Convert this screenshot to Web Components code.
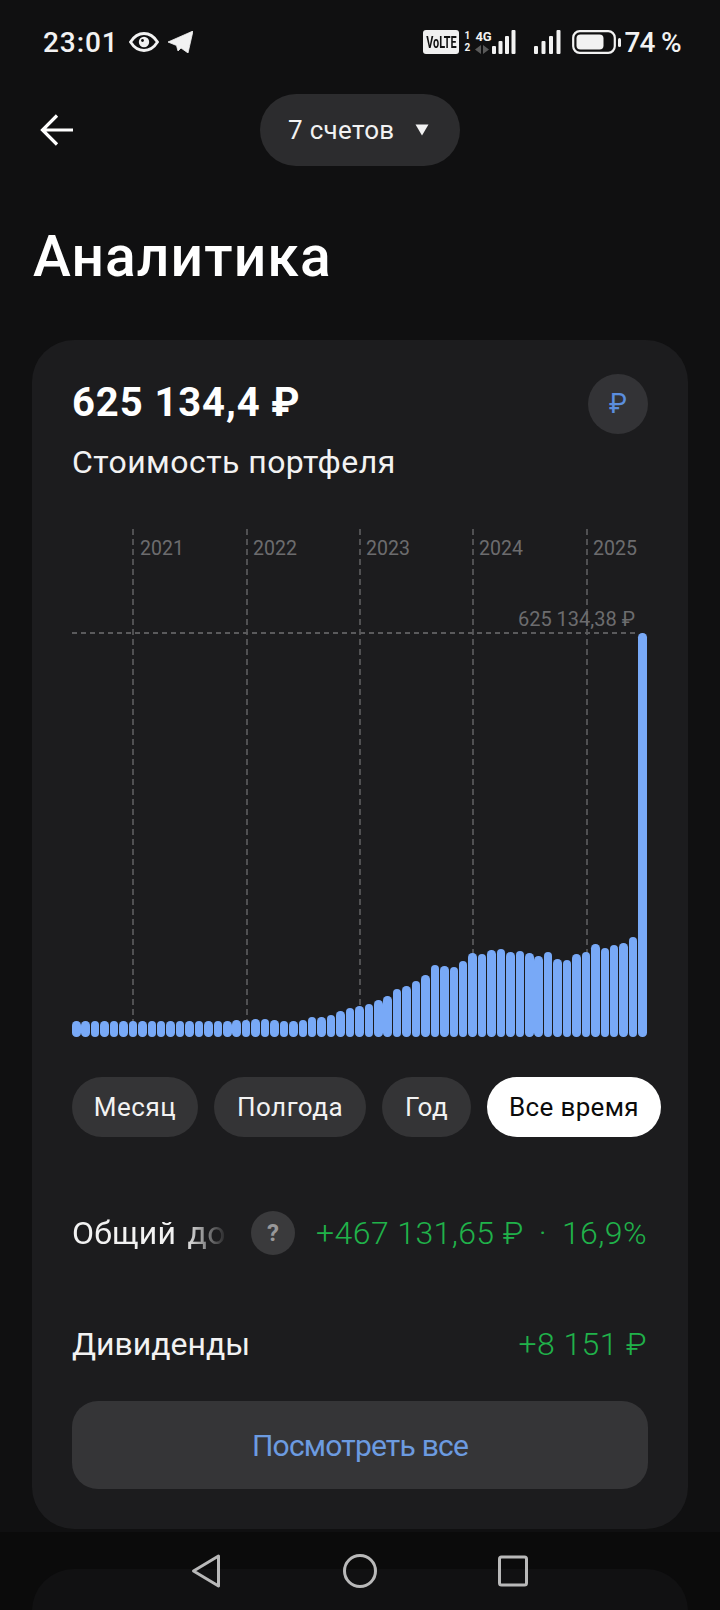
<!DOCTYPE html>
<html lang="ru">
<head>
<meta charset="utf-8">
<title>Аналитика</title>
<style>
  html, body { margin: 0; height: 1610px; overflow: hidden; background: #101011; }
  body { font-family: Roboto, "Noto Sans", sans-serif; color: #fff; }
</style>
</head>
<body>
<analytics-screen></analytics-screen>

<script>
class StatusBar extends HTMLElement {
  constructor() {
    super();
    this.attachShadow({ mode: "open" });
  }

  connectedCallback() {
    this.shadowRoot.innerHTML = `
      <style>
        :host { display: flex; align-items: center; height: 84px; padding: 0 39px 0 43px; box-sizing: border-box; color: #f2f2f2; }
        .time { font: 500 28px Roboto, sans-serif; letter-spacing: .9px; }
        .left { display: flex; align-items: center; }
        .right { display: flex; align-items: center; margin-left: auto; }
        svg { display: block; }
        .volte { background: #f0f0f0; color: #111; width: 36px; height: 24px; border-radius: 3px; display: flex; align-items: center; justify-content: center; }
        .volte b { font: 700 16px Roboto, sans-serif; transform: scaleX(.68); white-space: nowrap; }
        .sims { font: 700 10px/12px Roboto, sans-serif; width: 16px; text-align: center; }
        .net { display: flex; flex-direction: column; width: 18px; height: 24px; font: 700 13px/13px Roboto, sans-serif; margin-right: -1px; }
        .net svg { margin-top: 2px; }
        .pct { font: 500 28px Roboto, sans-serif; margin-left: 3px; letter-spacing: -.7px; }
      </style>
      <div class="left">
        <span class="time">23:01</span>
        <svg style="margin-left:10px" width="30" height="20" viewBox="0 0 30 20">
          <path d="M1.500 10C5 4.500 9.500 1.500 15 1.500S25 4.500 28.500 10C25 15.500 20.500 18.500 15 18.500S5 15.500 1.500 10z" fill="none" stroke="#f2f2f2" stroke-width="2.800"/>
          <circle cx="15" cy="10" r="5.200" fill="#f2f2f2"/>
          <circle cx="13.500" cy="8.500" r="1.400" fill="#101011"/>
        </svg>
        <svg style="margin-left:9px" width="25" height="22" viewBox="0 0 25 22">
          <path d="M0 11 L25 0 L20 22 L13 17 L10 20 L8.500 14.500 Z" fill="#f2f2f2" stroke="#f2f2f2" stroke-width=".8" stroke-linejoin="round"/>
        </svg>
      </div>
      <div class="right">
        <span class="volte"><b>VoLTE</b></span>
        <span class="sims">1<br>2</span>
        <span class="net">4G
          <svg width="14" height="9" viewBox="0 0 14 9" fill="#5a5a5a"><path d="M0 4.500 6 0v9zM8 0l6 4.500L8 9z"/></svg>
        </span>
        <svg width="24" height="24" viewBox="0 0 24 24" fill="#f2f2f2">
          <rect x="0" y="16" width="4" height="8" rx="1"/><rect x="6.500" y="11" width="4" height="13" rx="1"/><rect x="13" y="6" width="4" height="18" rx="1"/><rect x="19.500" y="0" width="4" height="24" rx="1"/>
        </svg>
        <svg style="margin-left:17px" width="29" height="24" viewBox="0 0 29 24" fill="#f2f2f2">
          <rect x="1" y="16" width="4" height="8" rx="1"/><rect x="8.500" y="11" width="4" height="13" rx="1"/><rect x="16" y="6" width="4" height="18" rx="1"/><rect x="23.500" y="0" width="4" height="24" rx="1"/>
        </svg>
        <svg style="margin-left:10px" width="49" height="24" viewBox="0 0 49 24">
          <rect x="1.200" y="1.200" width="41.600" height="21.600" rx="6.500" fill="none" stroke="#f2f2f2" stroke-width="2.200"/>
          <rect x="4.500" y="4.500" width="27" height="15" rx="4" fill="#f2f2f2"/>
          <rect x="46" y="8" width="3" height="9" rx="1.500" fill="#f2f2f2"/>
        </svg>
        <span class="pct">74 %</span>
      </div>
    `;
  }
}

class AppHeader extends HTMLElement {
  constructor() {
    super();
    this.attachShadow({ mode: "open" });
  }

  connectedCallback() {
    this.shadowRoot.innerHTML = `
      <style>
        :host { display: grid; grid-template-columns: 1fr auto 1fr; align-items: center; padding: 0 40px; height: 92px; }
        svg { display: block; }
        .pill { display: flex; align-items: center; width: 200px; height: 72px; box-sizing: border-box; padding-left: 28px; background: #2c2c2e; border-radius: 36px; font: 400 26px Roboto, sans-serif; letter-spacing: .3px; color: #f2f2f2; }
        .pill svg { margin-left: auto; margin-right: 31px; }
      </style>
      <svg width="34" height="32" viewBox="0 0 34 32" fill="none" stroke="#fff" stroke-width="3.200">
        <path d="M33 16H3M17 1.500 2.500 16 17 30.500"/>
      </svg>
      <div class="pill"><slot></slot>
        <svg width="14" height="12" viewBox="0 0 14 12"><path d="M0.500 0.500h13L7 11.500z" fill="#f2f2f2"/></svg>
      </div>
      <span></span>
    `;
  }
}

class BarChart extends HTMLElement {
  constructor() {
    super();
    this.attachShadow({ mode: "open" });
  }

  connectedCallback() {
    // heights of the bars in px, read off the reference
    const tops = [363,363,363,363,363,363,363,363,363,363,363,363,363,363,363,363,362,360,360,357,357,359,362,362,360,351,351,343,331,324,318,311,298,287,265,258,243,224,194,196,199,183,158,161,150,147,155,152,157,167,155,176,179,160,154,130,143,135,129,109];
    const bars = tops.map((t) => `<i style="height:${((410 - t) / 3).toFixed(1)}px"></i>`).join("");
    const years = [["2021", 60], ["2022", 173], ["2023", 286], ["2024", 399], ["2025", 513]];
    const lines = [60, 173.500, 287, 400, 513.500];
    this.shadowRoot.innerHTML = `
      <style>
        :host { display: block; position: relative; height: 508px; }
        .bars { position: absolute; inset: 0; display: flex; align-items: flex-end; justify-content: space-between; width: 575px; }
        i { display: block; width: 8.500px; background: #78a9f7; border-radius: 4.250px; }
        i.max { height: 404px; }
        .v { position: absolute; top: 0; bottom: 4px; width: 2px; background: repeating-linear-gradient(180deg, #505052 0 6px, transparent 6px 10px); }
        .h { position: absolute; left: 0; width: 566px; top: 103px; height: 2px; background: repeating-linear-gradient(90deg, #5a5a5c 0 5px, transparent 5px 9px); }
        .y { position: absolute; top: 8px; margin-left: 8px; font: 400 19.500px/24px Roboto, sans-serif; color: #6c6c6e; }
        .max-label { position: absolute; right: 13px; top: 78px; font: 400 20px/24px Roboto, "Noto Sans", sans-serif; color: #6c6c6e; white-space: nowrap; }
      </style>
      ${lines.map((x) => `<div class="v" style="left:${x}px"></div>`).join("")}
      <div class="h"></div>
      ${years.map(([y, x]) => `<span class="y" style="left:${x}px">${y}</span>`).join("")}
      <span class="max-label">625 134,38 ₽</span>
      <div class="bars">${bars}<i class="max"></i></div>
    `;
  }
}

class RangePills extends HTMLElement {
  constructor() {
    super();
    this.attachShadow({ mode: "open" });
  }

  connectedCallback() {
    const items = [["Месяц", 126], ["Полгода", 152], ["Год", 89], ["Все время", 174]];
    const active = items.length - 1;
    this.shadowRoot.innerHTML = `
      <style>
        :host { display: flex; gap: 16px; }
        span { flex: none; display: flex; align-items: center; justify-content: center; height: 60px; border-radius: 30px; background: #343436; color: #f2f2f2; font: 400 26px Roboto, sans-serif; letter-spacing: .5px; white-space: nowrap; }
        span.on { background: #fff; color: #0b0b0b; letter-spacing: .35px; }
      </style>
      ${items.map(([t, w], i) => `<span class="${i === active ? "on" : ""}" style="width:${w}px">${t}</span>`).join("")}
    `;
  }
}

class PortfolioCard extends HTMLElement {
  constructor() {
    super();
    this.attachShadow({ mode: "open" });
  }

  connectedCallback() {
    this.shadowRoot.innerHTML = `
      <style>
        :host { display: block; margin: 0 32px; padding: 34px 40px 40px; height: 1189px; box-sizing: border-box; background: #1c1c1e; border-radius: 42px; }
        .top { display: flex; justify-content: space-between; height: 60px; }
        .amount { font: 700 40px/48px Roboto, sans-serif; padding-top: 5px; letter-spacing: .9px; }
        .cur { width: 60px; height: 60px; border-radius: 50%; background: #333336; display: flex; align-items: center; justify-content: center; color: #5b8ede; font: 400 27px Roboto, sans-serif; }
        .sub { font: 400 32px/40px Roboto, sans-serif; letter-spacing: .45px; color: #f2f2f2; margin-top: 8px; }
        bar-chart { margin-top: 47px; }
        range-pills { margin-top: 40px; }
        .row { display: flex; align-items: center; justify-content: space-between; font: 300 32px/40px Roboto, sans-serif; }
        .row.one { margin-top: 74px; height: 44px; }
        .row.two { margin-top: 67px; height: 44px; }
        .label { color: #f2f2f2; font-weight: 400; white-space: nowrap; }
        .val { color: #20b24a; white-space: nowrap; letter-spacing: .4px; margin-right: 1px; display: flex; }
        .dot { padding: 0 15px; }
        .fade { flex: 0 0 178px; letter-spacing: .3px; word-spacing: 3px; -webkit-mask-image: linear-gradient(90deg, #000 112px, transparent 156px); mask-image: linear-gradient(90deg, #000 112px, transparent 156px); }
        .q { width: 44px; height: 44px; border-radius: 50%; background: #3a3a3c; color: #98989a; display: flex; align-items: center; justify-content: center; font: 700 24px Roboto, sans-serif; margin-left: 1px; margin-right: auto; }
        .btn { display: flex; align-items: center; justify-content: center; height: 88px; margin-top: 35px; border-radius: 26px; background: #353537; color: #6c9be0; font: 400 30px Roboto, sans-serif; letter-spacing: -.8px; }
      </style>
      <div class="top">
        <div class="amount"><slot name="amount"></slot></div>
        <div class="cur">₽</div>
      </div>
      <div class="sub"><slot name="label"></slot></div>
      <bar-chart></bar-chart>
      <range-pills></range-pills>
      <div class="row one">
        <span class="label fade">Общий до</span>
        <span class="q">?</span>
        <span class="val"><span>+467 131,65 ₽</span><span class="dot">·</span><span>16,9%</span></span>
      </div>
      <div class="row two">
        <span class="label">Дивиденды</span>
        <span class="val">+8 151 ₽</span>
      </div>
      <div class="btn">Посмотреть все</div>
    `;
  }
}

class NavBar extends HTMLElement {
  constructor() {
    super();
    this.attachShadow({ mode: "open" });
  }

  connectedCallback() {
    this.shadowRoot.innerHTML = `
      <style>
        :host { position: absolute; left: 0; right: 0; bottom: 0; height: 78px; background: rgba(6, 6, 6, .5); display: block; }
        svg { position: absolute; top: 21px; }
      </style>
      <svg style="left:190px" width="32" height="36" viewBox="0 0 32 36" fill="none" stroke="#b9b9b9" stroke-width="3" stroke-linejoin="round">
        <path d="M28.500 3 L3.500 18 L28.500 33 Z"/>
      </svg>
      <svg style="left:343px" width="34" height="36" viewBox="0 0 34 36" fill="none" stroke="#b9b9b9" stroke-width="3">
        <circle cx="17" cy="18" r="15.500"/>
      </svg>
      <svg style="left:497px" width="32" height="36" viewBox="0 0 32 36" fill="none" stroke="#b9b9b9" stroke-width="3" stroke-linejoin="round">
        <rect x="2.500" y="4" width="27" height="28" rx="2"/>
      </svg>
    `;
  }
}

class AnalyticsScreen extends HTMLElement {
  constructor() {
    super();
    this.attachShadow({ mode: "open" });
  }

  connectedCallback() {
    this.shadowRoot.innerHTML = `
      <style>
        :host { display: block; position: relative; height: 1610px; overflow: hidden; }
        h1 { margin: 0; padding: 45px 0 0 33px; height: 164px; box-sizing: border-box; font: 500 57px/72px Roboto, sans-serif; letter-spacing: 1.100px; }
        .next { margin: 40px 32px 0; height: 200px; background: #1c1c1e; border-radius: 42px; }
      </style>
      <status-bar></status-bar>
      <app-header>7 счетов</app-header>
      <h1>Аналитика</h1>
      <portfolio-card>
        <span slot="amount">625 134,4 ₽</span>
        <span slot="label">Стоимость портфеля</span>
      </portfolio-card>
      <div class="next"></div>
      <nav-bar></nav-bar>
    `;
  }
}

customElements.define("status-bar", StatusBar);
customElements.define("app-header", AppHeader);
customElements.define("bar-chart", BarChart);
customElements.define("range-pills", RangePills);
customElements.define("portfolio-card", PortfolioCard);
customElements.define("nav-bar", NavBar);
customElements.define("analytics-screen", AnalyticsScreen);
</script>
</body>
</html>
